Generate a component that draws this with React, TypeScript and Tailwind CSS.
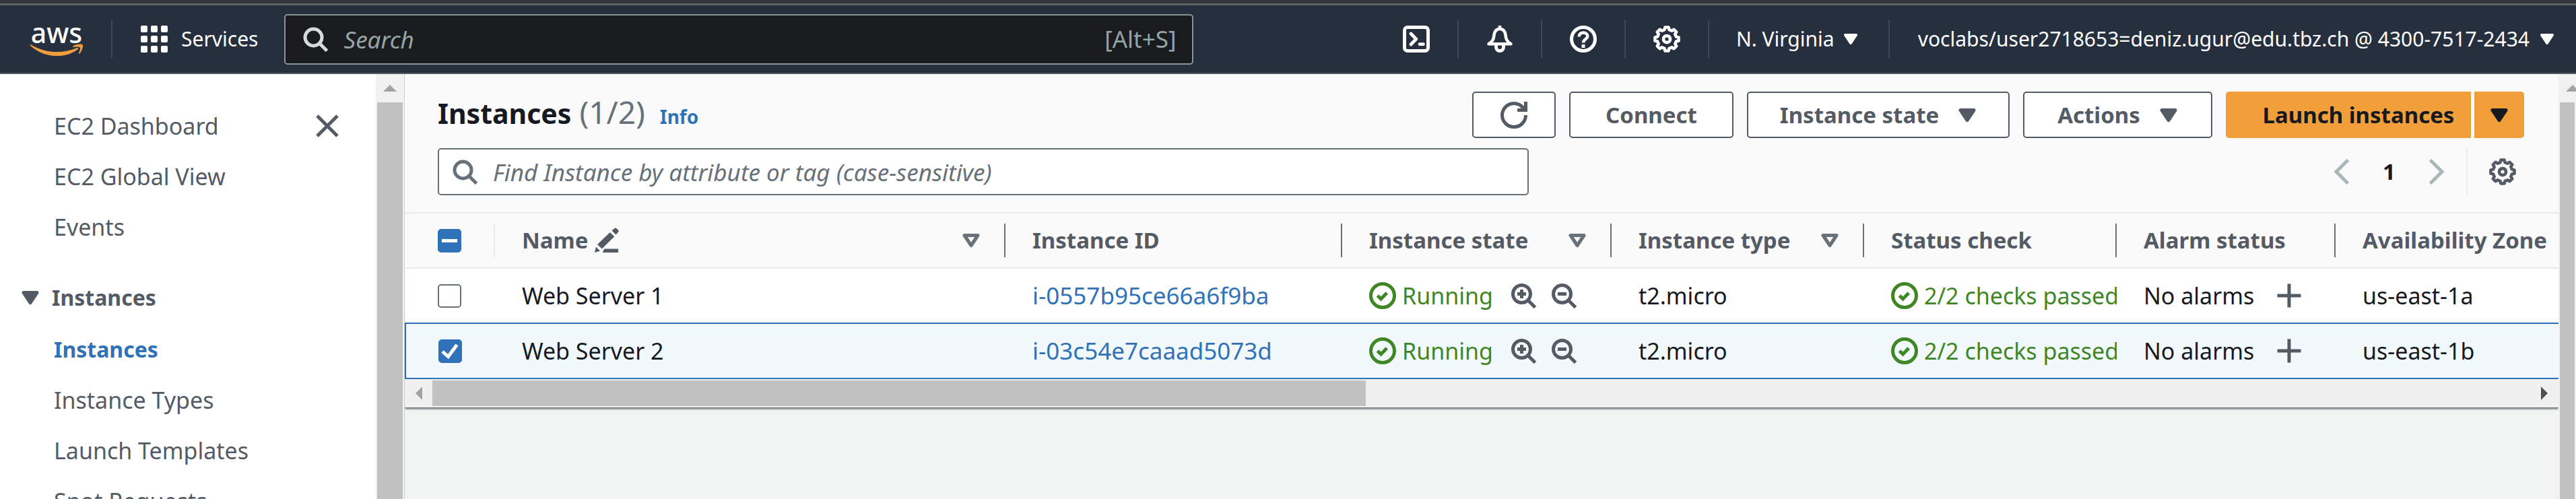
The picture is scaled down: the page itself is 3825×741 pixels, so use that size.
import type { ReactNode } from "react";

type IconProps = { className?: string; children: ReactNode };

function Icon({ className = "size-10", children }: IconProps) {
  return (
    <svg
      viewBox="0 0 16 16"
      fill="none"
      stroke="currentColor"
      strokeWidth={2}
      aria-hidden="true"
      className={`shrink-0 ${className}`}
    >
      {children}
    </svg>
  );
}

const SearchIcon = ({ className }: { className?: string }) => (
  <Icon className={className}>
    <circle cx="7" cy="7" r="5" />
    <path d="m15 15-4.5-4.5" />
  </Icon>
);

const CaretIcon = ({ className, outline }: { className?: string; outline?: boolean }) => (
  <Icon className={className}>
    <path d="M4 5h8l-4 6-4-6z" fill={outline ? "none" : "currentColor"} strokeLinejoin="round" />
  </Icon>
);

const TEETH = 8;
const gearPoints = Array.from({ length: TEETH }, (_, i) => {
  const base = (i * 2 * Math.PI) / TEETH - Math.PI / 2;
  const corner = (radius: number, offset: number) =>
    `${(8 + radius * Math.cos(base + offset)).toFixed(2)},${(8 + radius * Math.sin(base + offset)).toFixed(2)}`;
  return [corner(5.7, -0.25), corner(7.1, -0.15), corner(7.1, 0.15), corner(5.7, 0.25)].join(" ");
}).join(" ");

const GearIcon = ({ className }: { className?: string }) => (
  <Icon className={className}>
    <polygon points={gearPoints} strokeLinejoin="round" strokeWidth={1.8} />
    <circle cx="8" cy="8" r="2" strokeWidth={1.9} />
  </Icon>
);

const CheckCircleIcon = () => (
  <Icon>
    <circle cx="8" cy="8" r="7" />
    <path d="m5 8 2 2 3.5-3.6" />
  </Icon>
);

const ZoomIcon = ({ plus }: { plus?: boolean }) => (
  <Icon>
    <circle cx="7" cy="7" r="5.2" />
    <path d="m15 15-4.3-4.3M4.4 7h5.2" />
    {plus && <path d="M7 4.4v5.2" />}
  </Icon>
);

const PencilIcon = () => (
  <Icon>
    <g fill="currentColor" stroke="none">
      <path d="M6.6 13h8.2v2.2H5.4z" />
      <path d="M.8 15.2 1.6 11.8 4 14.3z" />
      <path d="M2.4 10.4 9.9 3.2l2.6 2.5-7.4 7.3z" />
      <path d="M11 2.2 12.6.8c.4-.3.8-.3 1.1 0l1.1 1.1c.4.4.4.8 0 1.2L13.4 4.6z" />
    </g>
  </Icon>
);

function AwsLogo() {
  return (
    <a href="#home" aria-label="AWS home" className="flex w-20 flex-col items-center text-white">
      <span className="text-[41px] leading-[34px] font-medium">aws</span>
      <svg viewBox="0 0 80 20" className="h-5 w-20 text-[#ee9d3c]" fill="currentColor" aria-hidden="true">
        <path d="M.6 2.4C.2 1.4 1.2.8 2.200 1.400 24 14.500 49 14.800 70 6.200c1.800-.7 3 .8 1.600 2C53 22.500 22 22 .6 2.400z" />
        <path d="M64.400 3.400C68 .4 77.500-.2 78.700 1.300c1.100 1.500-.3 9-4.400 13.300-.9.900-1.800.4-1.300-.8 1.200-2.900 2.700-7 1.700-8.200-1-1.300-5.700-1.200-9.300-.8-1.300.1-1.900-.6-1-1.400z" />
      </svg>
    </a>
  );
}

const HeaderDivider = () => <span className="h-14 w-0.5 shrink-0 bg-[#414750]" />;

function HeaderIconButton({ label, children }: { label: string; children: ReactNode }) {
  return (
    <button type="button" aria-label={label} className="flex w-[122px] items-center justify-center text-white">
      {children}
    </button>
  );
}

function TopBar() {
  return (
    <header className="flex h-[102px] shrink-0 items-center border-b-2 border-[#545b64] bg-[#252f3e] pr-[27px] pl-[44px] text-[30px] text-white">
      <AwsLogo />
      <div className="flex items-center pl-[41px]">
        <HeaderDivider />
        <button type="button" className="flex items-center gap-[20px] pl-[42px]">
          <svg viewBox="0 0 40 40" className="size-10" fill="currentColor" aria-hidden="true">
            {[0, 15, 30].map((y) => [0, 15, 30].map((x) => <rect key={`${x}-${y}`} x={x} y={y} width="10" height="10" rx="2" />))}
          </svg>
          Services
        </button>
      </div>
      <label className="ml-[39px] flex h-[75px] w-[1350px] shrink items-center gap-[22px] rounded-[5px] border-2 border-[#879596] bg-[#1a1b1f] px-[24px]">
        <SearchIcon className="size-10 text-[#d5dbdb]" />
        <input
          type="search"
          aria-label="Search"
          placeholder="Search"
          className="h-[64px] min-w-0 flex-1 bg-transparent text-[35px] outline-none placeholder:text-[#95a5a6] placeholder:italic"
        />
        <span className="text-[35px] text-[#95a5a6]">[Alt+S]</span>
      </label>
      <div className="ml-auto flex items-center">
        <HeaderIconButton label="CloudShell">
          <Icon>
            <rect x="1" y="1" width="14" height="14" rx="1.800" />
            <path d="M4.800 4.800 7.900 8l-3.100 3.200M10 11h2.200" strokeLinecap="round" strokeLinejoin="round" strokeWidth={1.900} />
          </Icon>
        </HeaderIconButton>
        <HeaderDivider />
        <HeaderIconButton label="Notifications">
          <Icon>
            <path d="M8 0v2" strokeWidth={1.800} />
            <path
              d="M1.400 10.900C4.800 8.700 4.300 6.800 4.700 5 5.100 3 6.300 2 8 2s2.900 1 3.300 3c.4 1.800-.1 3.700 3.300 5.900z"
              strokeLinejoin="round"
              strokeWidth={1.800}
            />
            <path d="M5.800 11.500v1.300a2.200 2.200 0 0 0 4.400 0v-1.300" />
          </Icon>
        </HeaderIconButton>
        <HeaderDivider />
        <HeaderIconButton label="Help">
          <Icon>
            <circle cx="8" cy="8" r="7" />
            <path d="M5.500 6.600C5.500 5 6.600 4.200 8 4.200s2.500.9 2.500 2.200C10.500 8 8 8.100 8 10.200" strokeWidth={1.800} />
            <path d="M8 11.200v2" />
          </Icon>
        </HeaderIconButton>
        <HeaderDivider />
        <HeaderIconButton label="Settings">
          <GearIcon />
        </HeaderIconButton>
        <HeaderDivider />
        <button type="button" aria-haspopup="menu" className="flex items-center gap-[8px] px-[40px] whitespace-nowrap">
          N. Virginia
          <CaretIcon className="size-8" />
        </button>
        <HeaderDivider />
        <button type="button" aria-haspopup="menu" className="flex items-center gap-[10px] pl-[42px] whitespace-nowrap">
          voclabs/user2718653=deniz.ugur@edu.tbz.ch @ 4300-7517-2434
          <CaretIcon className="size-8" />
        </button>
      </div>
    </header>
  );
}

function VerticalScrollbar({ className = "" }: { className?: string }) {
  return (
    <div aria-hidden="true" className={`flex shrink-0 flex-col bg-[#f1f1f1] px-0.5 ${className}`}>
      <div className="flex h-[42px] w-[38px] shrink-0 items-center justify-center">
        <svg viewBox="0 0 20 10" className="h-[10px] w-[20px]" fill="#a3a3a3">
          <path d="M10 0 20 10H0z" />
        </svg>
      </div>
      <div className="flex-1 bg-[#c1c1c1]" />
    </div>
  );
}

const topLinks = ["EC2 Dashboard", "EC2 Global View", "Events"];
const instanceLinks = ["Instances", "Instance Types", "Launch Templates", "Spot Requests"];

function Sidebar() {
  return (
    <aside className="flex w-[600px] shrink-0 overflow-hidden bg-white">
      <nav aria-label="EC2" className="flex-1 pt-[39px] text-[34px] text-[#545b64]">
        <div className="flex items-start justify-between pr-[52px] pl-[80px]">
          <ul>
            {topLinks.map((link) => (
              <li key={link}>
                <a href="#ec2" className="flex h-[75px] items-center">
                  {link}
                </a>
              </li>
            ))}
          </ul>
          <button type="button" aria-label="Close navigation" className="flex h-[75px] items-center">
            <Icon>
              <path d="m2 2 12 12M14 2 2 14" />
            </Icon>
          </button>
        </div>
        <button
          type="button"
          aria-expanded="true"
          className="mt-[30px] flex h-[75px] items-center gap-[12px] pl-[25px] text-[32px] font-bold"
        >
          <CaretIcon />
          Instances
        </button>
        <ul className="mt-[2px] pl-[80px]">
          {instanceLinks.map((link, i) => (
            <li key={link}>
              <a
                href="#ec2"
                aria-current={i === 0 ? "page" : undefined}
                className={`flex h-[75px] items-center ${i === 0 ? "text-[32px] font-bold text-[#3072b8]" : ""}`}
              >
                {link}
              </a>
            </li>
          ))}
        </ul>
      </nav>
      <VerticalScrollbar className="w-[42px]" />
    </aside>
  );
}

const outlineButton =
  "flex h-[69px] items-center justify-center rounded-[5px] border-2 border-[#545b64] bg-white text-[#545b64]";

function Toolbar() {
  return (
    <div className="flex flex-col gap-[15px] pt-[26px] pr-[51px] pb-[25px] pl-[49px]">
      <div className="flex h-[69px] items-start justify-between">
        <h1 className="flex items-baseline text-[41px] leading-[60px] font-bold text-[#16191f]">
          Instances
          <span className="ml-[12px] text-[46px] font-normal text-[#687078]">(1/2)</span>
          <a href="#info" className="ml-[22px] text-[28px] text-[#3072b8]">
            Info
          </a>
        </h1>
        <div className="flex gap-[20px] font-bold">
          <button type="button" aria-label="Refresh" className={`${outlineButton} w-[124px]`}>
            <Icon>
              <path d="M10 5h5V0M15 8a7 7 0 0 1-14 0 7 7 0 0 1 13.300-3" />
            </Icon>
          </button>
          <button type="button" className={`${outlineButton} w-[244px]`}>
            Connect
          </button>
          <button type="button" aria-haspopup="menu" className={`${outlineButton} w-[390px] gap-[22px] pl-[6px]`}>
            Instance state
            <CaretIcon />
          </button>
          <button type="button" aria-haspopup="menu" className={`${outlineButton} w-[281px] gap-[22px] pl-[6px]`}>
            Actions
            <CaretIcon />
          </button>
          <div className="flex gap-[5px] text-[#16191f]">
            <button type="button" className="h-[69px] w-[364px] rounded-l-[5px] bg-[#f19f38] pl-[30px]">
              Launch instances
            </button>
            <button
              type="button"
              aria-label="More launch options"
              className="flex h-[69px] w-[74px] items-center justify-center rounded-r-[5px] bg-[#f19f38]"
            >
              <CaretIcon />
            </button>
          </div>
        </div>
      </div>
      <div className="flex items-center justify-between">
        <label className="flex h-[70px] w-[1620px] items-center gap-[22px] rounded-[5px] border-2 border-[#687078] bg-white px-[18px]">
          <SearchIcon className="size-10 text-[#687078]" />
          <input
            type="search"
            aria-label="Find Instance"
            placeholder="Find Instance by attribute or tag (case-sensitive)"
            className="h-[60px] min-w-0 flex-1 bg-transparent text-[35px] outline-none placeholder:text-[#687078] placeholder:italic"
          />
        </label>
        <div className="flex items-center">
          <button type="button" aria-label="Previous page" className="text-[#aab7b8]">
            <Icon>
              <path d="m11 1-7 7 7 7" />
            </Icon>
          </button>
          <button type="button" aria-current="page" className="w-[97px] font-bold text-[#16191f]">
            1
          </button>
          <button type="button" aria-label="Next page" className="text-[#aab7b8]">
            <Icon>
              <path d="m5 1 7 7-7 7" />
            </Icon>
          </button>
          <span className="ml-[26px] h-[70px] w-0.5 bg-[#eaeded]" />
          <button type="button" aria-label="Preferences" className="mr-[12px] ml-[32px] text-[#545b64]">
            <GearIcon />
          </button>
        </div>
      </div>
    </div>
  );
}

function Checkbox({ label, state }: { label: string; state: "off" | "on" | "mixed" }) {
  return (
    <div className="grid w-[35px]">
      <input
        type="checkbox"
        aria-label={label}
        defaultChecked={state === "on"}
        ref={(el) => {
          if (el) el.indeterminate = state === "mixed";
        }}
        className="col-start-1 row-start-1 size-[35px] appearance-none rounded-[5px] border-2 border-[#687078] bg-white checked:border-[#3072b8] checked:bg-[#3072b8] indeterminate:border-[#3072b8] indeterminate:bg-[#3072b8]"
      />
      {state !== "off" && (
        <svg
          viewBox="0 0 35 35"
          className="pointer-events-none col-start-1 row-start-1 size-[35px]"
          fill="none"
          stroke="#fff"
          strokeWidth={5}
          aria-hidden="true"
        >
          <path d={state === "mixed" ? "M6 17.500h23" : "m6 18 8.500 7.500L27.500 8"} />
        </svg>
      )}
    </div>
  );
}

type Column = { title: string; width: string; sortable?: boolean; editable?: boolean };

const columns: Column[] = [
  { title: "Name", width: "w-[758px]", sortable: true, editable: true },
  { title: "Instance ID", width: "w-[500px]" },
  { title: "Instance state", width: "w-[400px]", sortable: true },
  { title: "Instance type", width: "w-[375px]", sortable: true },
  { title: "Status check", width: "w-[375px]" },
  { title: "Alarm status", width: "w-[325px]" },
  { title: "Availability Zone", width: "" },
];

const instances = [
  { name: "Web Server 1", id: "i-0557b95ce66a6f9ba", zone: "us-east-1a", selected: false },
  { name: "Web Server 2", id: "i-03c54e7caaad5073d", zone: "us-east-1b", selected: true },
];

function InstanceTable() {
  return (
    <table className="w-full table-fixed border-collapse text-left whitespace-nowrap">
      <thead className="border-y-2 border-[#eaeaea] text-[#545b64]">
        <tr>
          <th scope="col" className="w-[133px] p-0">
            <div className="flex h-[50px] items-center border-r-2 border-[#eaeaea] pl-[48px]">
              <Checkbox label="Select all instances" state="mixed" />
            </div>
          </th>
          {columns.map((column, i) => (
            <th key={column.title} scope="col" className={`h-[82px] p-0 ${column.width}`}>
              <div
                className={`flex h-[50px] items-center justify-between pr-[29px] pl-[40px] ${
                  i < columns.length - 1 ? "border-r-2 border-[#687078]" : ""
                }`}
              >
                <span className="flex items-center gap-[8px]">
                  {column.title}
                  {column.editable && <PencilIcon />}
                </span>
                {column.sortable && (
                  <button type="button" aria-label={`Sort by ${column.title}`} className="text-[#687078]">
                    <CaretIcon outline />
                  </button>
                )}
              </div>
            </th>
          ))}
        </tr>
      </thead>
      <tbody className="text-[34px] text-[#16191f]">
        {instances.map((instance) => (
          <tr
            key={instance.id}
            className={`h-[82px] ${
              instance.selected ? "border-y-2 border-l-2 border-[#3072b8] bg-[#f1f9fd]" : "bg-white"
            }`}
          >
            <td className="p-0 pl-[48px]">
              <Checkbox label={`Select ${instance.name}`} state={instance.selected ? "on" : "off"} />
            </td>
            <td className="p-0 pl-[40px]">{instance.name}</td>
            <td className="p-0 pl-[40px] text-[35px]">
              <a href="#instance" className="text-[#3072b8]">
                {instance.id}
              </a>
            </td>
            <td className="p-0 pl-[40px]">
              <div className="flex items-center">
                <span className="flex items-center gap-[9px] text-[#3f8624]">
                  <CheckCircleIcon />
                  Running
                </span>
                <button type="button" aria-label="Include state in filter" className="ml-[25px] text-[#545b64]">
                  <ZoomIcon plus />
                </button>
                <button type="button" aria-label="Exclude state from filter" className="ml-[20px] text-[#545b64]">
                  <ZoomIcon />
                </button>
              </div>
            </td>
            <td className="p-0 pl-[40px]">t2.micro</td>
            <td className="overflow-hidden p-0 pl-[40px]">
              <span className="flex items-center gap-[9px] text-[#3f8624]">
                <CheckCircleIcon />
                2/2 checks passed
              </span>
            </td>
            <td className="p-0 pl-[40px]">
              <div className="flex items-center gap-[32px]">
                No alarms
                <button type="button" aria-label="Add alarm" className="text-[#545b64]">
                  <Icon>
                    <path d="M8 1v14M1 8h14" />
                  </Icon>
                </button>
              </div>
            </td>
            <td className="p-0 pl-[40px]">{instance.zone}</td>
          </tr>
        ))}
      </tbody>
    </table>
  );
}

function HorizontalScrollbar() {
  return (
    <div aria-hidden="true" className="flex h-[42px] items-center bg-[#f0f0f0]">
      <div className="flex w-[41px] justify-center">
        <svg viewBox="0 0 10 20" className="h-[20px] w-[10px]" fill="#a3a3a3">
          <path d="M10 0v20L0 10z" />
        </svg>
      </div>
      <div className="flex flex-1">
        <div className="h-[38px] w-[44.500%] bg-[#c1c1c1]" />
      </div>
      <div className="flex w-[42px] justify-center">
        <svg viewBox="0 0 10 20" className="h-[20px] w-[10px]" fill="#505050">
          <path d="M0 0v20l10-10z" />
        </svg>
      </div>
    </div>
  );
}

export default function App() {
  return (
    <div className="flex h-screen flex-col overflow-hidden bg-[#f2f3f3] font-['Noto_Sans',sans-serif] text-[33px] leading-[44px]">
      <div className="h-2 shrink-0 border-b-3 border-[#5f6368] bg-[#35363a]" />
      <TopBar />
      <div className="flex min-h-0 flex-1">
        <Sidebar />
        <main className="min-w-0 flex-1 overflow-hidden border-l border-[#c9cfd0]">
          <section className="bg-[#fafafa] shadow-[0_2px_3px_#545b64]">
            <Toolbar />
            <InstanceTable />
            <HorizontalScrollbar />
          </section>
        </main>
        <VerticalScrollbar className="w-[26px] overflow-hidden" />
      </div>
    </div>
  );
}
